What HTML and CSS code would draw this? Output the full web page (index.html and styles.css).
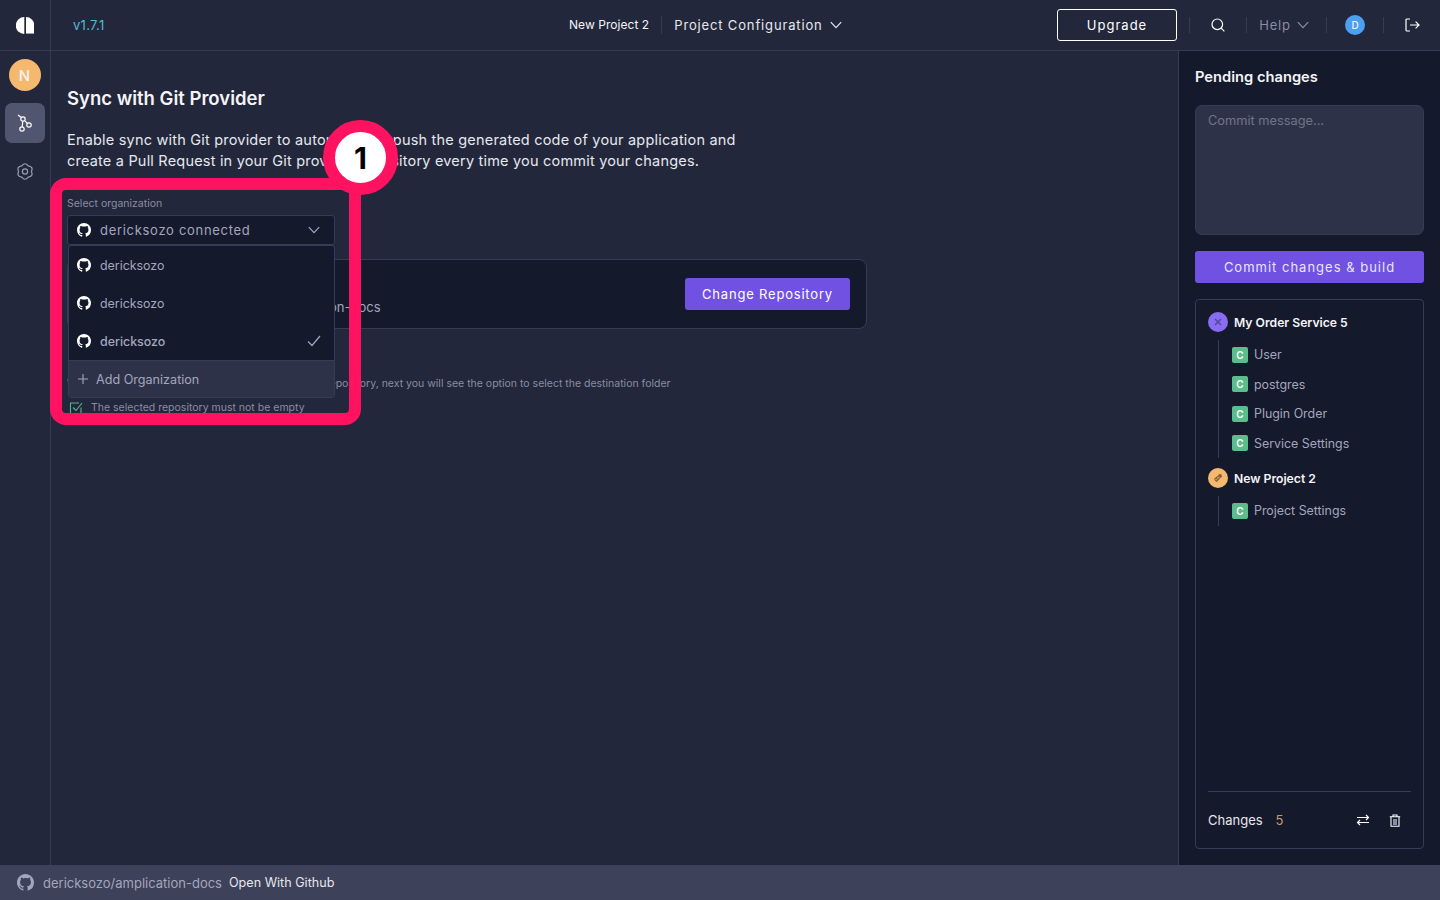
FILE: index.html
```html
<!DOCTYPE html>
<html>
    <head>
        <meta charset="UTF-8">
        <title>Sync with Git Provider</title>
        <link rel="stylesheet" href="styles.css">
    </head>
    <body>
        <svg class="sprites" width="0" height="0">
            <symbol id="github" viewBox="0 0 16 16">
                <path fill="currentColor" d="M8 0C3.58 0 0 3.58 0 8c0 3.54 2.29 6.53 5.47 7.59.4.07.55-.17.55-.38 0-.19-.01-.82-.01-1.49-2.01.37-2.53-.49-2.69-.94-.09-.23-.48-.94-.82-1.13-.28-.15-.68-.52-.01-.53.63-.01 1.08.58 1.23.82.72 1.21 1.87.87 2.33.66.07-.52.28-.87.51-1.07-1.78-.2-3.64-.89-3.64-3.95 0-.87.31-1.59.82-2.15-.08-.2-.36-1.02.08-2.12 0 0 .67-.21 2.2.82.64-.18 1.32-.27 2-.27.68 0 1.36.09 2 .27 1.53-1.04 2.2-.82 2.2-.82.44 1.1.16 1.92.08 2.12.51.56.82 1.27.82 2.15 0 3.07-1.87 3.75-3.65 3.95.29.25.54.73.54 1.48 0 1.07-.01 1.93-.01 2.2 0 .21.15.46.55.38A8.013 8.013 0 0016 8c0-4.42-3.58-8-8-8z"/>
            </symbol>
            <symbol id="chevron" viewBox="0 0 12 8">
                <path fill="none" stroke="currentColor" stroke-width="1.2" d="M.8 1.2 6 6.6l5.2-5.4"/>
            </symbol>
        </svg>

        <div class="app">
            <header class="topbar">
                <div class="logo-cell">
                    <svg width="18" height="17" viewBox="0 0 18 17">
                        <path fill="#fff" d="M8.3 0v17A8.5 8.5 0 0 1 8.3 0z"/>
                        <path fill="#fff" d="M10 0a8.3 8.3 0 0 1 8.3 8.3V16H10z"/>
                        <path fill="#9a9eb5" d="M10 16h8.3v1H10z"/>
                    </svg>
                </div>
                <div class="version">v1.7.1</div>
                <div class="project-name">New Project 2</div>
                <div class="project-menu">
                    Project Configuration
                    <svg class="chevron"><use href="#chevron"/></svg>
                </div>
                <div class="topbar-right">
                    <button class="upgrade">Upgrade</button>
                    <div class="top-cell search-cell">
                        <svg width="16" height="16" viewBox="0 0 16 16" fill="none" stroke="#fff" stroke-width="1.2">
                            <circle cx="7.3" cy="7.3" r="5.3"/>
                            <path d="m11.2 11.2 3.2 3.2"/>
                        </svg>
                    </div>
                    <div class="top-cell help-cell">
                        Help
                        <svg class="chevron"><use href="#chevron"/></svg>
                    </div>
                    <div class="top-cell avatar-cell"><span class="user-avatar">D</span></div>
                    <div class="top-cell logout-cell">
                        <svg width="16" height="16" viewBox="0 0 16 16" fill="none" stroke="#fff" stroke-width="1.2">
                            <path d="M6 2H3a1 1 0 0 0-1 1v10a1 1 0 0 0 1 1h3"/>
                            <path d="M6 8h9M11.6 4.6 15 8l-3.4 3.4"/>
                        </svg>
                    </div>
                </div>
            </header>

            <nav class="rail">
                <span class="project-avatar">N</span>
                <a class="rail-link active">
                    <svg width="15" height="18" viewBox="0 0 15 18" fill="none" stroke="#fff" stroke-width="1.2">
                        <circle cx="6" cy="5" r="2.2"/>
                        <circle cx="12" cy="11" r="2.2"/>
                        <circle cx="5" cy="15" r="2.2"/>
                        <path d="M1 1l3.4 2.6M5.8 7.2l-.6 5.6M7.6 6.6l2.8 2.8"/>
                    </svg>
                </a>
                <a class="rail-link">
                    <svg width="16" height="17" viewBox="0 0 16 17" fill="none" stroke="#9a9eb5" stroke-width="1.2">
                        <path d="M14.4 8.5Q16.66 3.5 11.2 2.96Q8-1.5 4.8 2.96Q-.66 3.5 1.6 8.5Q-.66 13.5 4.8 14.04Q8 18.5 11.2 14.04Q16.66 13.5 14.4 8.5z"/>
                        <circle cx="8" cy="8.5" r="2.6"/>
                    </svg>
                </a>
            </nav>

            <main class="content">
                <h1>Sync with Git Provider</h1>
                <p class="intro">Enable sync with Git provider to automatically push the generated code of your application and<br>create a Pull Request in your Git provider repository every time you commit your changes.</p>

                <div class="org-field">
                    <label class="org-label">Select organization</label>
                    <div class="org-select">
                        <svg class="gh"><use href="#github"/></svg>
                        <span class="org-value">dericksozo connected</span>
                        <svg class="chevron"><use href="#chevron"/></svg>
                    </div>

                    <div class="org-menu">
                        <div class="org-option">
                            <svg class="gh"><use href="#github"/></svg>
                            <span>dericksozo</span>
                        </div>
                        <div class="org-option">
                            <svg class="gh"><use href="#github"/></svg>
                            <span>dericksozo</span>
                        </div>
                        <div class="org-option selected">
                            <svg class="gh"><use href="#github"/></svg>
                            <span>dericksozo</span>
                            <svg class="tick" width="14" height="12" viewBox="0 0 14 12" fill="none" stroke="#a3a7bd" stroke-width="1.2"><path d="m1 6.5 4 4 8-9.5"/></svg>
                        </div>
                        <div class="org-add">
                            <svg width="12" height="12" viewBox="0 0 12 12" stroke="#a3a7bd" stroke-width="1.1"><path d="M6 1v10M1 6h10"/></svg>
                            Add Organization
                        </div>
                    </div>
                </div>

                <section class="repo-card">
                    <div class="repo-name">https://github.com/dericksozo/amplication-docs</div>
                    <button class="change-repo">Change Repository</button>
                </section>

                <p class="repo-note">When you select any existing repository or any new repository, next you will see the option to select the destination folder</p>
                <div class="repo-check">
                    <svg width="14" height="14" viewBox="0 0 14 14" fill="none" stroke="#4fb98a" stroke-width="1.1">
                        <path d="M12 6.5V12.5H1.5V2H10"/>
                        <path d="m4 6.5 3 3 6-7.5"/>
                    </svg>
                    The selected repository must not be empty
                </div>
            </main>

            <aside class="pending">
                <h2>Pending changes</h2>
                <div class="commit-box">Commit message...</div>
                <button class="commit-btn">Commit changes &amp; build</button>
                <div class="changes-box">
                    <div class="tree">
                        <div class="tree-head">
                            <span class="tree-dot purple">
                                <svg width="10" height="10" viewBox="0 0 10 10" stroke="#55479c" stroke-width="1.5"><path d="m2 2 6 6M8 2 2 8"/></svg>
                            </span>
                            My Order Service 5
                        </div>
                        <ul class="tree-list">
                            <li><span class="badge">C</span>User</li>
                            <li><span class="badge">C</span>postgres</li>
                            <li><span class="badge">C</span>Plugin Order</li>
                            <li><span class="badge">C</span>Service Settings</li>
                        </ul>
                        <div class="tree-head">
                            <span class="tree-dot orange">
                                <svg width="10" height="10" viewBox="0 0 10 10" fill="none" stroke="#8a6230" stroke-width="1.2"><circle cx="7" cy="3" r="1.3" fill="#8a6230"/><path d="M5.5 3 1.5 6M6.5 5 3.5 8.5M1.5 6l2 2.5M3 4.8l2 2.2"/></svg>
                            </span>
                            New Project 2
                        </div>
                        <ul class="tree-list">
                            <li><span class="badge">C</span>Project Settings</li>
                        </ul>
                    </div>
                    <div class="changes-row">
                        <span>Changes</span>
                        <span class="changes-count">5</span>
                        <svg class="swap" width="14" height="14" viewBox="0 0 14 14" fill="none" stroke="#fff" stroke-width="1.2">
                            <path d="M1 4.5h11.5M10 2l2.5 2.5L10 7"/>
                            <path d="M13 9.5H1.5M4 7 1.5 9.5 4 12"/>
                        </svg>
                        <svg width="12" height="13" viewBox="0 0 12 13" fill="none" stroke="#fff" stroke-width="1.1">
                            <path d="M.8 2.8h10.4M4 2.6V1h4v1.6"/>
                            <path d="M2 2.8v9.4h8V2.8"/>
                            <rect x="4" y="5" width="4" height="6" fill="#8a8da3" stroke="none"/>
                        </svg>
                    </div>
                </div>
            </aside>

            <footer class="statusbar">
                <svg class="gh-status"><use href="#github"/></svg>
                <span class="status-repo">dericksozo/amplication-docs</span>
                <span class="status-link">Open With Github</span>
            </footer>
        </div>

        <div class="highlight"></div>
        <div class="step-marker">1</div>
    </body>
</html>
```

FILE: styles.css
```css
:root {
    --page-background-color: #22273b;
    --panel-background-color: #15192c;
    --line-color: #373c56;
    --muted-text-color: #a3a7bd;
    --dim-text-color: #8a8da3;
    --text-color: #f4f4f7;
    --pink: #ff1260;
    --purple: #7151e2;
}

* {
    box-sizing: border-box;
}

html, body {
    margin: 0;
    height: 100%;
    overflow: hidden;
}

body {
    background-color: var(--page-background-color);
    color: var(--text-color);
    font-family: Inter, "Noto Sans", sans-serif;
    font-size: 14px;
}

.sprites {
    position: absolute;
}

button {
    font-family: inherit;
    cursor: pointer;
}

.app {
    display: grid;
    grid-template-areas:
        "top top top"
        "rail content pending"
        "status status status";
    grid-template-columns: 51px 1fr 262px;
    grid-template-rows: 51px 1fr 35px;
    height: 900px;
}

.chevron {
    width: 12px;
    height: 8px;
}

/* top bar */
.topbar {
    grid-area: top;
    display: flex;
    align-items: center;
    border-bottom: 1px solid var(--line-color);
}

.logo-cell {
    display: flex;
    align-items: center;
    justify-content: center;
    width: 51px;
    height: 50px;
    border-right: 1px solid var(--line-color);
}

.version {
    width: 518px;
    padding-left: 22px;
    color: #58b9d4;
    font-size: 13px;
    letter-spacing: 0.3px;
}

.project-name {
    padding-right: 12px;
    border-right: 1px solid var(--line-color);
    font-size: 12px;
    line-height: 18px;
    letter-spacing: 0.05px;
}

.project-menu {
    display: flex;
    align-items: center;
    gap: 7px;
    margin-left: 12px;
    font-size: 13px;
    letter-spacing: 0.85px;
    color: #e6e7ee;
}

.topbar-right {
    display: flex;
    align-items: center;
    margin-left: auto;
    height: 32px;
}

.upgrade {
    width: 120px;
    height: 32px;
    margin-right: 12px;
    background: none;
    border: 1px solid #fff;
    border-radius: 3px;
    color: #fff;
    font-size: 13px;
    letter-spacing: 1px;
}

.top-cell {
    display: flex;
    align-items: center;
    justify-content: center;
    height: 16px;
    border-left: 1px solid var(--line-color);
}

.search-cell {
    width: 57px;
}

.help-cell {
    width: 80px;
    gap: 6px;
    padding-right: 5px;
    color: var(--dim-text-color);
    font-size: 13px;
    letter-spacing: 0.8px;
}

.avatar-cell {
    width: 57px;
}

.user-avatar {
    display: flex;
    align-items: center;
    justify-content: center;
    width: 20px;
    height: 20px;
    border-radius: 50%;
    background-color: #4ba0ef;
    font-size: 10px;
    font-weight: 500;
}

.logout-cell {
    width: 57px;
}

/* left rail */
.rail {
    grid-area: rail;
    display: flex;
    flex-direction: column;
    align-items: center;
    padding: 8px 1px 0 0;
    border-right: 1px solid var(--line-color);
}

.project-avatar {
    display: flex;
    align-items: center;
    justify-content: center;
    width: 32px;
    height: 32px;
    border-radius: 50%;
    background-color: #f4b86f;
    font-size: 15px;
    font-weight: 500;
}

.rail-link {
    display: flex;
    align-items: center;
    justify-content: center;
    width: 40px;
    height: 40px;
    margin-top: 8px;
    border-radius: 7px;
}

.rail-link.active {
    margin-top: 12px;
    padding: 0 1px 0 0;
    background-color: #515670;
}

/* main column */
.content {
    grid-area: content;
    position: relative;
    padding: 35px 16px 0;
}

h1 {
    margin: 0;
    font-size: 18.5px;
    line-height: 24px;
    font-weight: 600;
}

.intro {
    margin: 19px 0 0;
    font-size: 14.5px;
    line-height: 21px;
    letter-spacing: 0.2px;
    color: #e6e7ee;
}

.org-field {
    position: relative;
    width: 268px;
    margin-top: 25px;
}

.org-label {
    display: block;
    height: 15px;
    margin-bottom: 4px;
    font-size: 10.5px;
    line-height: 15px;
    color: var(--dim-text-color);
}

.org-select {
    display: flex;
    align-items: center;
    height: 30px;
    padding: 0 14px 0 9px;
    background-color: var(--panel-background-color);
    border: 1px solid var(--line-color);
    border-radius: 3px;
    color: var(--muted-text-color);
    font-size: 13px;
    letter-spacing: 0.7px;
}

.gh {
    flex: none;
    width: 14px;
    height: 14px;
    margin-right: 9px;
    color: #fff;
}

.org-value {
    flex: 1;
}

.org-menu {
    position: absolute;
    top: 49px;
    left: 1px;
    z-index: 2;
    width: 267px;
    height: 153px;
    background-color: var(--panel-background-color);
    border: 1px solid var(--line-color);
    border-radius: 3px;
    overflow: hidden;
}

.org-option {
    display: flex;
    align-items: center;
    height: 38px;
    padding: 0 13px 0 8px;
    color: var(--muted-text-color);
    font-size: 12.4px;
}

.org-option.selected {
    font-weight: 500;
}

.org-option span {
    flex: 1;
}

.org-add {
    display: flex;
    align-items: center;
    gap: 7px;
    height: 37px;
    padding-left: 8px;
    background-color: #2e3249;
    border-top: 1px solid var(--line-color);
    color: var(--muted-text-color);
    font-size: 12.6px;
}

.repo-card {
    display: flex;
    align-items: center;
    justify-content: space-between;
    width: 800px;
    height: 70px;
    margin-top: 14px;
    padding: 0 16px 0 16px;
    background-color: var(--panel-background-color);
    border: 1px solid var(--line-color);
    border-radius: 8px;
}

.repo-name {
    margin-top: 26px;
    color: var(--muted-text-color);
    font-size: 13px;
}

.change-repo {
    width: 165px;
    height: 32px;
    background-color: var(--purple);
    border: none;
    border-radius: 3px;
    color: #fff;
    font-size: 13px;
    letter-spacing: 0.8px;
}

.repo-note {
    margin: 48px 0 0;
    font-size: 10.5px;
    line-height: 14px;
    color: var(--dim-text-color);
}

.repo-check {
    display: flex;
    align-items: center;
    gap: 8px;
    margin: 10px 0 0 2px;
    font-size: 10.5px;
    line-height: 14px;
    color: var(--dim-text-color);
}

/* right panel */
.pending {
    grid-area: pending;
    display: flex;
    flex-direction: column;
    padding: 16px;
    background-color: var(--panel-background-color);
    border-left: 1px solid var(--line-color);
}

h2 {
    margin: 0;
    font-size: 14.7px;
    line-height: 20px;
    font-weight: 600;
}

.commit-box {
    height: 130px;
    margin-top: 18px;
    padding: 7px 12px;
    background-color: #2e3249;
    border: 1px solid var(--line-color);
    border-radius: 7px;
    color: #71748a;
    font-size: 12.8px;
    line-height: 16px;
}

.commit-btn {
    height: 32px;
    margin-top: 16px;
    background-color: var(--purple);
    border: none;
    border-radius: 3px;
    color: #e8e6fa;
    font-size: 13px;
    letter-spacing: 1px;
}

.changes-box {
    flex: 1;
    display: flex;
    flex-direction: column;
    margin-top: 16px;
    padding: 12px 12px 0;
    border: 1px solid var(--line-color);
    border-radius: 4px;
}

.tree {
    flex: 1;
}

.tree-head {
    display: flex;
    align-items: center;
    gap: 6px;
    height: 20px;
    font-size: 12.2px;
    font-weight: 600;
}

.tree-dot {
    display: flex;
    align-items: center;
    justify-content: center;
    width: 20px;
    height: 20px;
    border-radius: 50%;
}

.tree-dot.purple {
    background-color: #8a6cf3;
}

.tree-dot.orange {
    background-color: #f4b86f;
}

.tree-list {
    margin: 8px 0 10px 10px;
    padding: 0 0 0 13px;
    list-style: none;
    border-left: 1px solid var(--line-color);
}

.tree-list li {
    display: flex;
    align-items: center;
    gap: 6px;
    height: 29.5px;
    color: var(--muted-text-color);
    font-size: 12.4px;
}

.badge {
    display: flex;
    align-items: center;
    justify-content: center;
    width: 16px;
    height: 16px;
    border-radius: 2px;
    background-color: #5bbd8b;
    color: #fff;
    font-size: 10px;
    font-weight: 600;
}

.changes-row {
    display: flex;
    align-items: center;
    height: 57px;
    border-top: 1px solid var(--line-color);
    font-size: 13px;
    color: #e6e7ee;
}

.changes-count {
    margin-left: 13px;
    color: #c79a62;
}

.swap {
    margin-left: auto;
    margin-right: 19px;
}

.changes-row svg:last-child {
    margin-right: 10px;
}

/* footer */
.statusbar {
    grid-area: status;
    display: flex;
    align-items: center;
    padding-left: 17px;
    background-color: #3d4159;
    font-size: 13px;
}

.gh-status {
    width: 17px;
    height: 17px;
    margin-right: 9px;
    color: #a3a7bd;
}

.status-repo {
    color: var(--muted-text-color);
}

.status-link {
    margin-left: 7px;
    color: #e6e7ee;
    font-size: 12.6px;
}

/* tutorial annotation drawn over the page */
.highlight {
    position: absolute;
    top: 178px;
    left: 50px;
    z-index: 5;
    width: 311px;
    height: 247px;
    border: 12px solid var(--pink);
    border-radius: 16px;
}

.step-marker {
    position: absolute;
    top: 120px;
    left: 323px;
    z-index: 6;
    display: flex;
    align-items: center;
    justify-content: center;
    width: 75px;
    height: 75px;
    background-color: #fff;
    border: 12px solid var(--pink);
    border-radius: 50%;
    color: #000;
    font-size: 30px;
    font-weight: 700;
}
```
